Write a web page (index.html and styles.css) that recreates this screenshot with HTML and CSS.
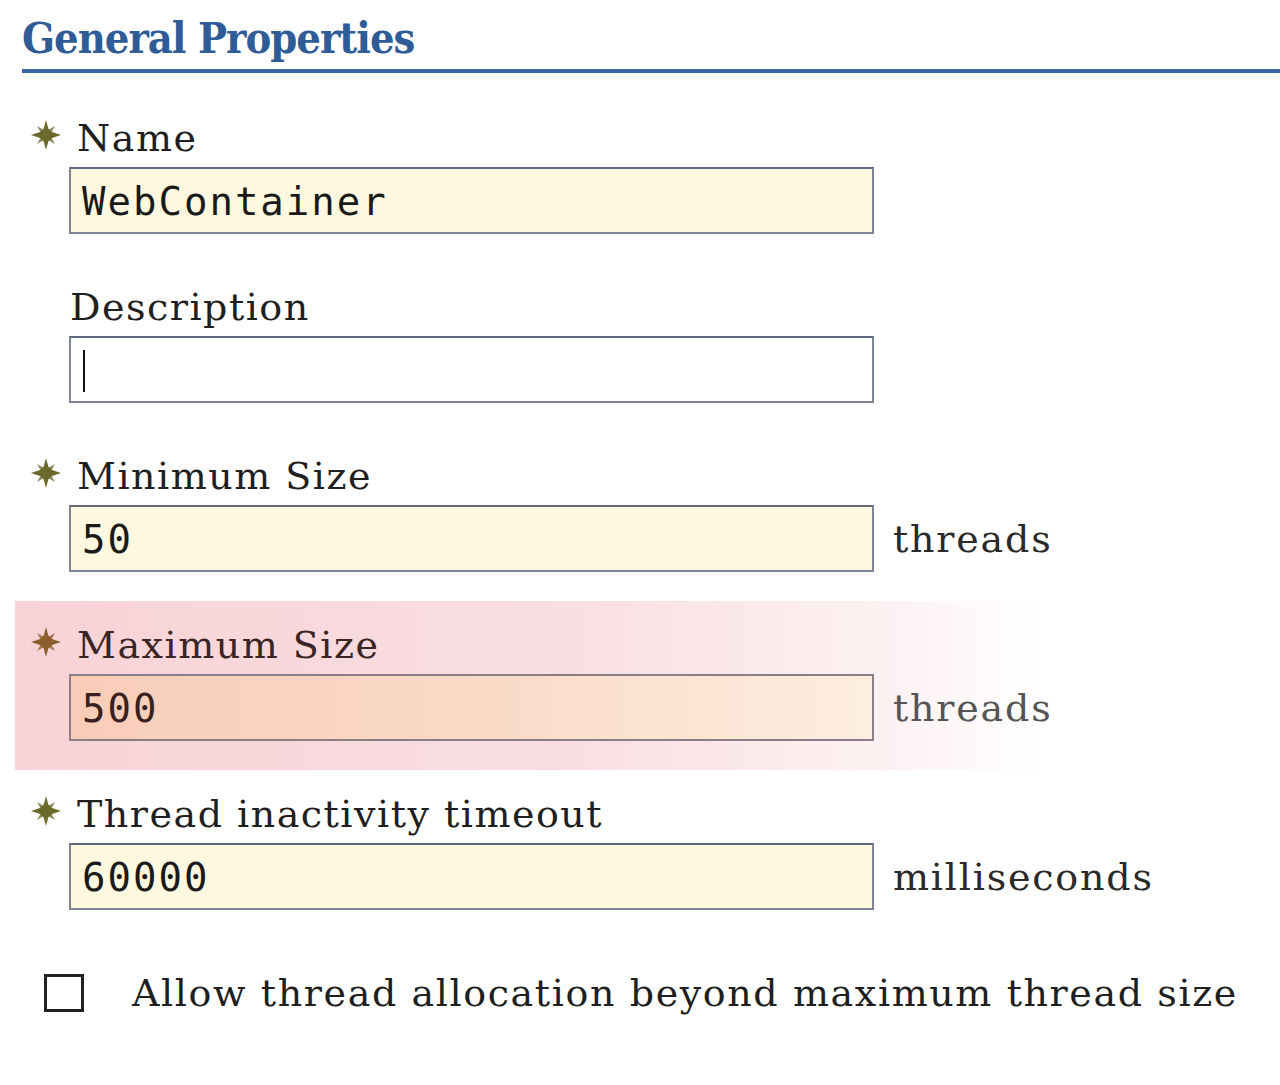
FILE: index.html
```html
<!DOCTYPE html>
<html>
<head>
<meta charset="utf-8">
<link rel="stylesheet" href="styles.css">
</head>
<body>
<div class="page">
  <h1 class="title">General Properties</h1>

  <div class="field">
    <div class="label"><span class="star"><svg viewBox="0 0 32 32" width="32" height="32"><path d="M16 1 L19 12 L31 16 L19 20 L16 31 L13 20 L1 16 L13 12 Z" fill="currentColor"/><path d="M7 7 L16 12 L25 7 L20 16 L25 25 L16 20 L7 25 L12 16 Z" fill="currentColor" opacity="0.75"/><circle cx="16" cy="16" r="6.5" fill="currentColor"/></svg></span>Name</div>
    <div class="row"><div class="input req">WebContainer</div></div>
  </div>

  <div class="field">
    <div class="label nostar">Description</div>
    <div class="row"><div class="input plain"><span class="caret"></span></div></div>
  </div>

  <div class="field">
    <div class="label"><span class="star"><svg viewBox="0 0 32 32" width="32" height="32"><path d="M16 1 L19 12 L31 16 L19 20 L16 31 L13 20 L1 16 L13 12 Z" fill="currentColor"/><path d="M7 7 L16 12 L25 7 L20 16 L25 25 L16 20 L7 25 L12 16 Z" fill="currentColor" opacity="0.75"/><circle cx="16" cy="16" r="6.5" fill="currentColor"/></svg></span>Minimum Size</div>
    <div class="row"><div class="input req">50</div><span class="unit">threads</span></div>
  </div>

  <div class="field hot">
    <div class="label"><span class="star"><svg viewBox="0 0 32 32" width="32" height="32"><path d="M16 1 L19 12 L31 16 L19 20 L16 31 L13 20 L1 16 L13 12 Z" fill="currentColor"/><path d="M7 7 L16 12 L25 7 L20 16 L25 25 L16 20 L7 25 L12 16 Z" fill="currentColor" opacity="0.75"/><circle cx="16" cy="16" r="6.5" fill="currentColor"/></svg></span>Maximum Size</div>
    <div class="row"><div class="input req">500</div><span class="unit">threads</span></div>
  </div>

  <div class="field">
    <div class="label"><span class="star"><svg viewBox="0 0 32 32" width="32" height="32"><path d="M16 1 L19 12 L31 16 L19 20 L16 31 L13 20 L1 16 L13 12 Z" fill="currentColor"/><path d="M7 7 L16 12 L25 7 L20 16 L25 25 L16 20 L7 25 L12 16 Z" fill="currentColor" opacity="0.75"/><circle cx="16" cy="16" r="6.5" fill="currentColor"/></svg></span>Thread inactivity timeout</div>
    <div class="row"><div class="input req">60000</div><span class="unit">milliseconds</span></div>
  </div>

  <div class="check">
    <span class="box"></span>
    <span class="check-label">Allow thread allocation beyond maximum thread size</span>
  </div>
</div>
</body>
</html>
```

FILE: styles.css
```css
html, body {
  margin: 0;
  padding: 0;
  background: #ffffff;
}
.page {
  font-family: "DejaVu Serif", "Liberation Serif", serif;
  color: #1f1f1f;
  padding-top: 14px;
}
.title {
  margin: 0 0 21px 22px;
  font-family: "DejaVu Serif Condensed", "DejaVu Serif", serif;
  font-weight: bold;
  font-size: 43px;
  line-height: 48px;
  color: #2f5c96;
  letter-spacing: -1px;
  border-bottom: 4px solid #3a67a3;
  padding-bottom: 7px;
}
.field {
  margin-left: 15px;
  padding: 25px 0 29px 15px;
  width: 1020px;
}
.field.hot {
  background: linear-gradient(to right, #f8d2d6 0%, #f9dfe2 55%, #fdf2f3 85%, rgba(255,255,255,0) 100%);
}
.label {
  display: flex;
  align-items: flex-start;
  height: 48px;
  font-size: 38px;
  line-height: 38px;
  letter-spacing: 1.5px;
  color: #1f1f1f;
}
.label.nostar {
  padding-left: 40px;
}
.star {
  width: 47px;
  height: 32px;
  flex: none;
  color: #6b6a2a;
}
.star svg {
  display: block;
}
.hot .star {
  color: #8a5f2c;
}
.hot .label {
  color: #3a2424;
}
.row {
  display: flex;
  align-items: center;
  padding-left: 39px;
}
.input {
  box-sizing: border-box;
  flex: none;
  width: 805px;
  height: 67px;
  border: 2px solid #7d8596;
  border-top-color: #5f6a80;
  padding: 2px 11px 0;
  font-family: "DejaVu Sans Mono", "Liberation Mono", monospace;
  font-size: 39px;
  line-height: 61px;
  letter-spacing: 2px;
  color: #1a1a1a;
  display: flex;
  align-items: center;
}
.input.req {
  background: #fef8e0;
}
.hot .input.req {
  background: linear-gradient(to right, #f8cdb8 0%, #fad9c6 50%, #fdeee0 100%);
  border-color: #8a7f88;
  color: #3a1f1f;
}
.input.plain {
  background: #ffffff;
}
.caret {
  width: 2px;
  height: 42px;
  background: #111;
  margin-left: 1px;
}
.unit {
  margin-left: 19px;
  font-size: 38px;
  letter-spacing: 1.8px;
  color: #2a2a2a;
}
.hot .unit {
  color: #555555;
}
.check {
  display: flex;
  align-items: center;
  padding: 32px 0 0 44px;
}
.box {
  box-sizing: border-box;
  width: 40px;
  height: 38px;
  border: 3px solid #222;
  background: #fff;
  flex: none;
}
.check-label {
  margin-left: 48px;
  font-size: 38px;
  letter-spacing: 1.6px;
  color: #1f1f1f;
}
```
